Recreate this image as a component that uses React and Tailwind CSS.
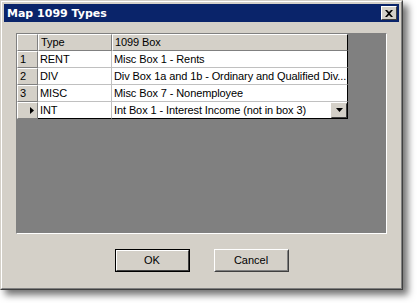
export default function App() {
  const rows = [
    ["1", "RENT", "Misc Box 1 - Rents"],
    ["2", "DIV", "Div Box 1a and 1b - Ordinary and Qualified Div..."],
    ["3", "MISC", "Misc Box 7 - Nonemployee"],
  ];
  return (
    <div className="w-[417px] h-[303px] bg-white" style={{ fontFamily: "'Liberation Sans', Arial, sans-serif" }}>
      <div className="w-[403px] h-[290px] bg-[#d4d0c8] border border-t-[#d4d0c8] border-l-[#d4d0c8] border-r-[#404040] border-b-[#404040] shadow-[5px_5px_7px_rgba(0,0,0,0.55)]">
        <div className="h-full border border-t-white border-l-white border-r-[#808080] border-b-[#808080] p-[2px] flex flex-col">
          {/* title bar */}
          <div className="h-[18px] bg-[#0a246a] flex items-center justify-between pl-[3px] pr-[2px]">
            <span className="text-white font-bold text-[11px] leading-none" style={{ fontFamily: "'DejaVu Sans', sans-serif" }}>Map 1099 Types</span>
            <div className="w-[16px] h-[14px] bg-[#d4d0c8] border border-t-white border-l-white border-r-[#404040] border-b-[#404040] flex items-center justify-center">
              <svg width="8" height="7" viewBox="0 0 8 7">
                <path d="M0 0h2l2 2 2-2h2L5 3.5 8 7H6L4 5 2 7H0l3-3.5z" fill="#000" />
              </svg>
            </div>
          </div>
          {/* content */}
          <div className="flex-1 flex flex-col px-[12px] pt-[11px]">
            <div className="h-[201px] bg-[#808080] border border-t-[#808080] border-l-[#808080] border-r-white border-b-white">
              <div className="w-[331px] text-[11px] leading-none text-black tracking-[-0.1px]">
                {/* header */}
                <div className="flex h-[17px] bg-[#d4d0c8]">
                  <div className="w-[21px] border-r border-b border-[#808080] border-t border-t-white border-l border-l-white"></div>
                  <div className="w-[74px] border-r border-b border-[#808080] border-t border-t-white border-l border-l-white flex items-center pl-[2px]">Type</div>
                  <div className="flex-1 border-r border-b border-[#808080] border-t border-t-white border-l border-l-white flex items-center pl-[2px] border-r-black">1099 Box</div>
                </div>
                {rows.map((r) => (
                  <div key={r[0]} className="flex h-[17px]">
                    <div className="w-[21px] bg-[#d4d0c8] border-r border-b border-[#808080] border-t border-t-white border-l border-l-white flex items-center pl-[2px]">{r[0]}</div>
                    <div className="w-[74px] bg-white border-r border-b border-[#c0c0c0] flex items-center pl-[2px]">{r[1]}</div>
                    <div className="flex-1 bg-white border-r border-b border-[#c0c0c0] border-r-black flex items-center pl-[2px] whitespace-nowrap overflow-hidden">{r[2]}</div>
                  </div>
                ))}
                <div className="flex h-[17px]">
                  <div className="w-[21px] bg-[#d4d0c8] border-r border-b border-[#808080] border-t border-t-white border-l border-l-white flex items-center justify-end pr-[3px]">
                    <svg width="4" height="7" viewBox="0 0 4 7"><path d="M0 0l4 3.5L0 7z" fill="#000" /></svg>
                  </div>
                  <div className="w-[74px] bg-white border-r border-b border-[#c0c0c0] border-b-black flex items-center pl-[2px]">INT</div>
                  <div className="flex-1 bg-white border-r border-b border-r-black border-b-black flex items-center pl-[2px] justify-between whitespace-nowrap">
                    <span>Int Box 1 - Interest Income (not in box 3)</span>
                    <div className="w-[16px] h-[15px] bg-[#d4d0c8] border border-t-[#d4d0c8] border-l-[#d4d0c8] border-r-[#404040] border-b-[#404040] flex items-center justify-center">
                      <svg width="7" height="4" viewBox="0 0 7 4"><path d="M0 0h7L3.5 4z" fill="#000" /></svg>
                    </div>
                  </div>
                </div>
              </div>
            </div>
            <div className="flex justify-center gap-[24px] mt-[15px]">
              <div className="w-[75px] h-[23px] border border-black">
                <div className="h-full border border-t-white border-l-white border-r-[#404040] border-b-[#404040] bg-[#d4d0c8] flex items-center justify-center text-[11px]">OK</div>
              </div>
              <div className="w-[75px] h-[23px] border border-t-white border-l-white border-r-[#404040] border-b-[#404040]">
                <div className="h-full border border-t-[#d4d0c8] border-l-[#d4d0c8] border-r-[#808080] border-b-[#808080] bg-[#d4d0c8] flex items-center justify-center text-[11px]">Cancel</div>
              </div>
            </div>
          </div>
        </div>
      </div>
    </div>
  );
}
